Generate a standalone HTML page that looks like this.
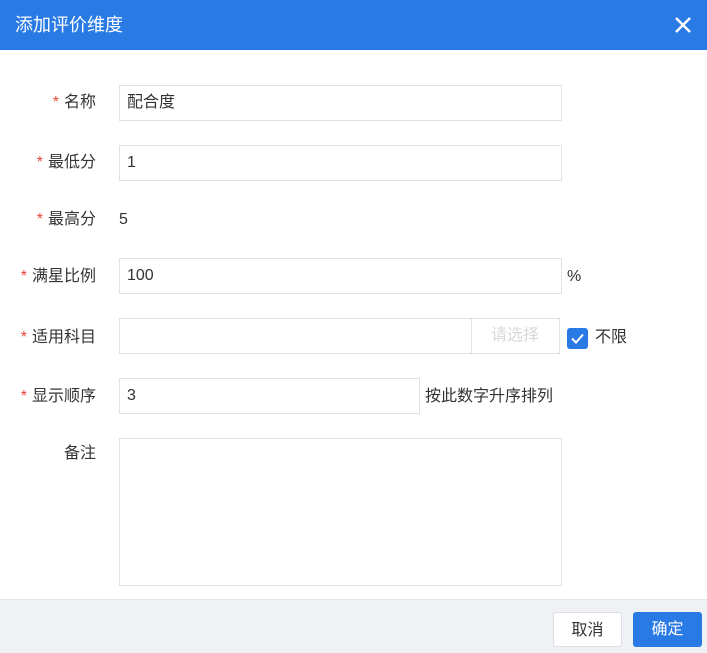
<!DOCTYPE html>
<html><head><meta charset="utf-8"><style>
*{box-sizing:border-box;margin:0;padding:0}
body{width:707px;height:653px;position:relative;background:#fff;font-family:"Liberation Sans","Noto Sans CJK SC",sans-serif;font-size:16px;color:#333;overflow:hidden}
.hd{position:absolute;left:0;top:0;width:707px;height:50px;background:#2a7ae6;color:#fff;font-size:18px;line-height:50px;padding-left:15px}
.x{position:absolute;right:14px;top:15px;width:20px;height:20px}
.lb{position:absolute;right:611px;text-align:right;white-space:nowrap;line-height:20px}
.lb i{color:#e5463a;font-style:normal;margin-right:5px}
.in{position:absolute;left:119px;border:1px solid #e2e2e2;height:36px;line-height:34px;padding-left:7px}
.t{position:absolute;line-height:20px;white-space:nowrap}
.ft{position:absolute;left:0;top:599px;width:707px;height:54px;background:#eff1f5;border-top:1px solid #e4e6ea}
.b{position:absolute;top:612px;height:35px;border-radius:3px;line-height:35px;text-align:center;font-size:16px}
</style></head><body>
<div class="hd">添加评价维度
<svg class="x" viewBox="0 0 20 20"><path d="M3 3L17 17M17 3L3 17" stroke="#fff" stroke-width="2.4"/></svg></div>
<div class="lb" style="top:93px"><i>*</i>名称</div>
<div class="in" style="top:85px;width:443px">配合度</div>
<div class="lb" style="top:153px"><i>*</i>最低分</div>
<div class="in" style="top:145px;width:443px">1</div>
<div class="lb" style="top:210px"><i>*</i>最高分</div>
<div class="t" style="left:119px;top:210px">5</div>
<div class="lb" style="top:267px"><i>*</i>满星比例</div>
<div class="in" style="top:258px;width:443px">100</div>
<div class="t" style="left:567px;top:267px">%</div>
<div class="lb" style="top:328px"><i>*</i>适用科目</div>
<div class="in" style="top:318px;width:353px"></div>
<div class="in" style="top:318px;left:471px;width:89px;padding:0;text-align:center;color:#d8d8d8;border-left:none">请选择</div>
<div style="position:absolute;left:567px;top:328px;width:21px;height:21px;background:#2a7ae6;border-radius:3px"><svg viewBox="0 0 21 21" width="21" height="21"><path d="M5 10.5L9 14.5L16 6.5" stroke="#fff" stroke-width="2" fill="none"/></svg></div>
<div class="t" style="left:595px;top:328px">不限</div>
<div class="lb" style="top:387px"><i>*</i>显示顺序</div>
<div class="in" style="top:378px;width:301px">3</div>
<div class="t" style="left:425px;top:387px">按此数字升序排列</div>
<div class="lb" style="top:444px">备注</div>
<div class="in" style="top:438px;width:443px;height:148px"></div>
<div class="ft"></div>
<div class="b" style="left:553px;width:69px;background:#fff;border:1px solid #dcdfe6;color:#333">取消</div>
<div class="b" style="left:633px;width:69px;background:#2a7ae6;color:#fff">确定</div>
</body></html>
